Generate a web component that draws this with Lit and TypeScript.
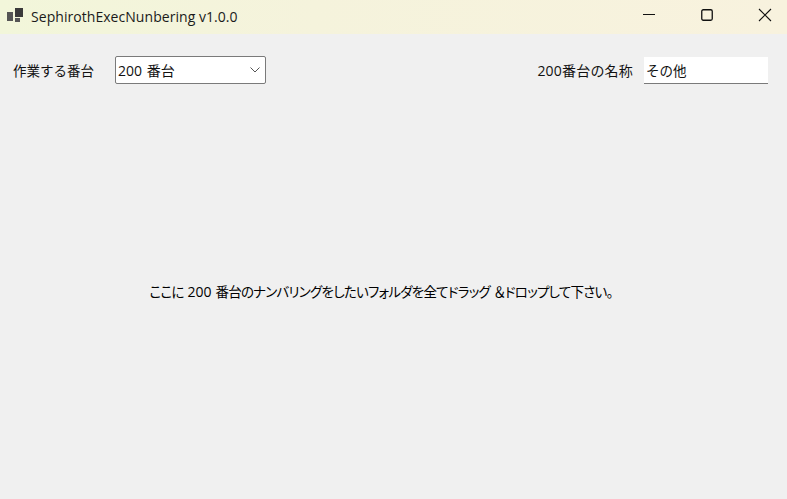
import { LitElement, html, css } from "lit";
import { customElement } from "lit/decorators.js";

@customElement("app-root")
export class AppRoot extends LitElement {
  static styles = css`
    :host {
      display: flex;
      flex-direction: column;
      width: 787px;
      height: 499px;
      overflow: hidden;
      background: #f0f0f0;
      color: #111;
      font-family: "Open Sans", "Noto Sans CJK JP", sans-serif;
      font-size: 14px;
    }
    .titlebar {
      display: flex;
      align-items: center;
      height: 34px;
      flex: none;
      padding-left: 7px;
      background: linear-gradient(90deg, #f2f6da 0%, #f5f3dc 40%, #f8f2de 100%);
    }
    .app-icon { width: 16px; height: 14px; margin-right: 8px; margin-top: -4px; }
    .title { flex: 1; font-size: 14px; letter-spacing: 0.05px; margin-top: -2px; font-family: "Open Sans", sans-serif; color: #1a1a1a; }
    .winbtn { width: 46px; height: 30px; align-self: flex-start; display: flex; align-items: center; justify-content: center; }
    .winbtn.min { margin-right: 12px; }
    .winbtn.max { margin-right: 12px; }
    .winbtn.close { margin-right: -1px; }
    .toolbar {
      display: flex;
      align-items: center;
      justify-content: space-between;
      padding: 22px 19px 0 13px;
    }
    .group { display: flex; align-items: center; }
    .label-left { width: 102px; padding-bottom: 1px; font-size: 13.5px; font-family: "Noto Sans CJK JP", sans-serif; }
    .select {
      box-sizing: border-box;
      width: 151px;
      height: 28px;
      display: flex;
      align-items: center;
      justify-content: space-between;
      background: #fff;
      border: 1px solid #7a7a7a;
      border-radius: 2px;
      padding: 0 5px 1px 2px;
    }
    .select span { word-spacing: 1px; }
    .label-right { margin-right: 11px; letter-spacing: 0.2px; }
    .input {
      box-sizing: border-box;
      width: 124px;
      height: 27px;
      display: flex;
      align-items: center;
      padding: 0 2px;
      font-size: 13.5px;
      background: #fff;
      border-bottom: 1px solid #7a7a7a;
    }
    .message {
      flex: 1;
      display: flex;
      justify-content: center;
      padding: 197px 25px 0 0;
      color: #000;
      white-space: pre;
      font-size: 13.5px;
      font-feature-settings: "palt";
      letter-spacing: -0.76px;
      word-spacing: 1.2px;
    }
    .num { font-size: 14px; letter-spacing: 0; }
    .amp { font-feature-settings: normal; margin: 0 -1px 0 3px; }
  `;

  render() {
    return html`
      <div class="titlebar">
        <svg class="app-icon" viewBox="0 0 16 14">
          <rect x="0" y="4" width="6" height="9" fill="#555"></rect>
          <rect x="8" y="0" width="8" height="9" fill="#3a3a3a"></rect>
          <rect x="8" y="10" width="5" height="4" fill="#555"></rect>
        </svg>
        <div class="title">SephirothExecNunbering v1.0.0</div>
        <div class="winbtn min">
          <svg width="12" height="12" viewBox="0 0 12 12"><path d="M0 5.5h12" stroke="#111" fill="none"></path></svg>
        </div>
        <div class="winbtn max">
          <svg width="12" height="12" viewBox="0 0 12 12"><rect x=".75" y=".75" width="10.5" height="10.5" rx="1.5" stroke="#111" stroke-width="1.3" fill="none"></rect></svg>
        </div>
        <div class="winbtn close">
          <svg width="14" height="14" viewBox="0 0 14 14"><path d="M1 1l12 12M13 1L1 13" stroke="#111" stroke-width="1.1" fill="none"></path></svg>
        </div>
      </div>
      <div class="toolbar">
        <div class="group">
          <div class="label-left">作業する番台</div>
          <div class="select">
            <span>200 番台</span>
            <svg width="10" height="6" viewBox="0 0 10 6"><path d="M.5.5L5 5 9.5.5" stroke="#555" fill="none"></path></svg>
          </div>
        </div>
        <div class="group">
          <div class="label-right">200番台の名称</div>
          <div class="input">その他</div>
        </div>
      </div>
      <div class="message"><span>ここに <span class="num">200</span> 番台のナンバリングをしたいフォルダを全てドラッグ<span class="amp">＆</span>ドロップして下さい。</span></div>
    `;
  }
}
